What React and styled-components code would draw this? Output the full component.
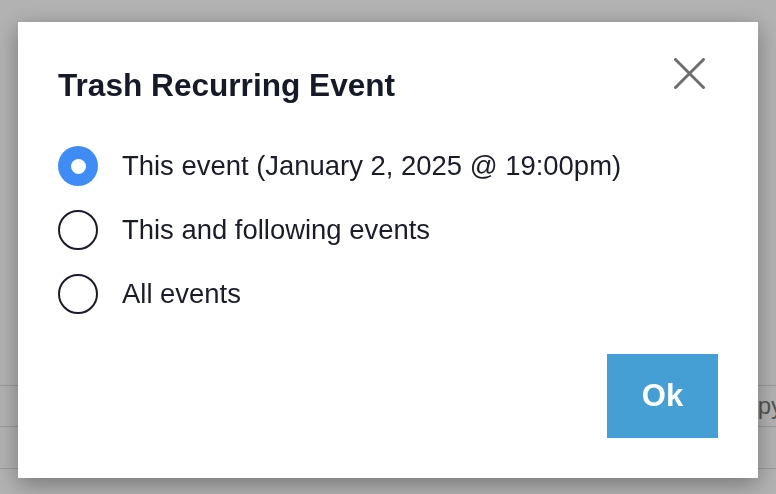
import React, { useState } from 'react';
import styled, { createGlobalStyle } from 'styled-components';

const Global = createGlobalStyle`
  html, body {
    margin: 0;
    padding: 0;
    background: #fff;
    overflow: hidden;
    font-family: "Liberation Sans", Arial, Helvetica, sans-serif;
  }
`;

const Page = styled.div`
  width: 776px;
  height: 494px;
  padding-top: 385px;
  box-sizing: border-box;
  overflow: hidden;
`;

const Row = styled.div`
  height: ${props => props.height}px;
  border-top: 1px solid #dcdcdc;
  box-sizing: border-box;
  display: flex;
  align-items: center;
  padding-left: 727px;
  font-size: 24px;
  color: #7a7a7a;
  white-space: nowrap;
`;

const Overlay = styled.div`
  position: fixed;
  inset: 0;
  background: rgba(0, 0, 0, 0.3);
`;

const Modal = styled.div`
  position: fixed;
  left: 18px;
  top: 22px;
  width: 740px;
  height: 456px;
  box-sizing: border-box;
  background: #fff;
  padding: 45px 40px 40px;
  box-shadow: 0 6px 22px rgba(0, 0, 0, 0.35);
  display: flex;
  flex-direction: column;
`;

const Title = styled.h2`
  margin: 0;
  font-size: 31.6px;
  line-height: 36px;
  font-weight: bold;
  color: #161a27;
`;

const Close = styled.button`
  position: absolute;
  top: 36px;
  right: 53px;
  width: 31px;
  height: 31px;
  padding: 0;
  border: none;
  background: none;
  cursor: pointer;
  svg {
    display: block;
  }
`;

const Options = styled.div`
  margin-top: 43px;
  display: flex;
  flex-direction: column;
  gap: 24px;
`;

const Option = styled.label`
  display: flex;
  align-items: center;
  gap: 24px;
  height: 40px;
  font-size: 27.45px;
  color: #1b1c2a;
  cursor: pointer;
`;

const Radio = styled.span`
  width: 40px;
  height: 40px;
  box-sizing: border-box;
  border-radius: 50%;
  flex-shrink: 0;
  display: flex;
  align-items: center;
  justify-content: center;
  border: ${props => (props.checked ? 'none' : '2px solid #1b1c2a')};
  background: ${props => (props.checked ? '#3f8cf6' : '#fff')};
  &::after {
    content: '';
    display: ${props => (props.checked ? 'block' : 'none')};
    width: 15px;
    height: 15px;
    border-radius: 50%;
    background: #fff;
  }
`;

const Footer = styled.div`
  margin-top: auto;
  display: flex;
  justify-content: flex-end;
`;

const OkButton = styled.button`
  width: 111px;
  height: 84px;
  border: none;
  background: #469fd4;
  color: #fff;
  font-family: "Liberation Sans", Arial, sans-serif;
  font-weight: bold;
  font-size: 31px;
  cursor: pointer;
`;

const options = [
  'This event (January 2, 2025 @ 19:00pm)',
  'This and following events',
  'All events'
];

export default function App() {
  const [selected, setSelected] = useState(0);

  return (
    <>
      <Global />
      <Page>
        <Row height={41}>Copy</Row>
        <Row height={42} />
        <Row height={30} />
      </Page>
      <Overlay />
      <Modal>
        <Title>Trash Recurring Event</Title>
        <Close aria-label="Close">
          <svg width="31" height="31" viewBox="0 0 31 31">
            <path d="M1.5 1.5 L29.5 29.5 M29.5 1.5 L1.5 29.5" stroke="#6e6e6e" strokeWidth="3" strokeLinecap="round" />
          </svg>
        </Close>
        <Options>
          {options.map((text, index) => (
            <Option key={index} onClick={() => setSelected(index)}>
              <Radio checked={selected === index} />
              {text}
            </Option>
          ))}
        </Options>
        <Footer>
          <OkButton>Ok</OkButton>
        </Footer>
      </Modal>
    </>
  );
}
